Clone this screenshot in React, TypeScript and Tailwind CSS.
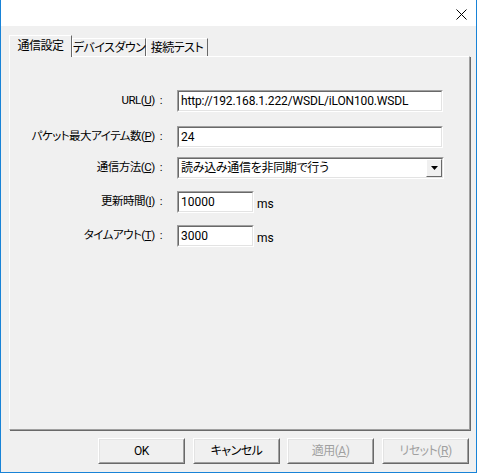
import React from "react";

const font = "font-['Roboto','Noto_Sans_CJK_JP',sans-serif] [font-feature-settings:'palt']";

function Sunken({ className = "", children }: { className?: string; children?: React.ReactNode }) {
  return (
    <div className={`border border-t-[#a0a0a0] border-l-[#a0a0a0] border-b-white border-r-white ${className}`}>
      <div className="h-full border border-t-[#696969] border-l-[#696969] border-b-[#e3e3e3] border-r-[#e3e3e3] bg-white flex items-center">
        {children}
      </div>
    </div>
  );
}

function Btn({ children, disabled = false, className = "" }: { children: React.ReactNode; disabled?: boolean; className?: string }) {
  return (
    <div className={`w-[87px] h-[26px] border border-t-white border-l-white border-b-[#696969] border-r-[#696969] ${className}`}>
      <div
        className={`h-full border border-t-[#e3e3e3] border-l-[#e3e3e3] border-b-[#a0a0a0] border-r-[#a0a0a0] bg-[#f0f0f0] flex items-center justify-center text-[12px] whitespace-nowrap tracking-[-0.5px] ${
          disabled ? "text-[#a0a0a0]" : "text-black"
        }`}
      >
        {children}
      </div>
    </div>
  );
}

function Label({ children }: { children: React.ReactNode }) {
  return (
    <div className="w-[155px] pr-[3px] flex justify-end items-center text-[11.5px] text-black whitespace-nowrap tracking-[-0.5px]">
      <span>{children}</span>
      <span className="ml-[5px]">:</span>
    </div>
  );
}

export default function App() {
  return (
    <div className={`w-[477px] h-[473px] border-x border-b border-[#1883d7] bg-[#f0f0f0] flex flex-col ${font}`}>
      {/* title bar */}
      <div className="h-[26px] bg-white flex justify-end items-start pt-[9px] pr-[9px]">
        <svg width="11" height="11" viewBox="0 0 11 11">
          <path d="M0.5 0.5 L10.5 10.5 M10.5 0.5 L0.5 10.5" stroke="#000" strokeWidth="1" />
        </svg>
      </div>

      <div className="flex-1 flex flex-col pl-[8px] pr-[6px] pt-[9px] pb-[8px]">
        {/* tabs */}
        <div className="h-[21px] flex items-end text-[12px] whitespace-nowrap tracking-[-0.5px]">
          <div className="relative z-10 -mb-[1px] w-[63px] h-[22px] bg-[#f0f0f0] border-t border-l border-white border-r border-r-[#696969] flex items-center justify-center pb-[1px] text-black">
            通信設定
          </div>
          <div className="w-[74px] h-[18px] border-t border-l border-white border-r border-r-[#696969] flex items-center justify-center text-black">
            デバイスダウン
          </div>
          <div className="w-[62px] h-[18px] border-t border-l border-white border-r border-r-[#696969] flex items-center justify-center text-black">
            接続テスト
          </div>
        </div>

        {/* panel */}
        <div className="h-[374px] border border-t-white border-l-white border-r-[#a0a0a0] border-b-[#a0a0a0] shadow-[1px_1px_0_#696969] bg-[#f0f0f0] pt-[33px] text-[12px]">
          <div className="flex items-center h-[22px]">
            <Label>
              URL(<u>U</u>)
            </Label>
            <Sunken className="ml-[12px] w-[266px] h-[22px]">
              <span className="pl-[2px] text-black tracking-[-0.15px]">http://192.168.1.222/WSDL/iLON100.WSDL</span>
            </Sunken>
          </div>
          <div className="flex items-center h-[22px] mt-[14px]">
            <Label>
              パケット最大アイテム数(<u>P</u>)
            </Label>
            <Sunken className="ml-[12px] w-[266px] h-[22px]">
              <span className="pl-[2px] text-black">24</span>
            </Sunken>
          </div>
          <div className="flex items-center h-[22px] mt-[9px]">
            <Label>
              通信方法(<u>C</u>)
            </Label>
            <Sunken className="ml-[12px] w-[267px] h-[22px]">
              <span className="flex-1 pl-[2px] text-black tracking-[-0.3px]">読み込み通信を非同期で行う</span>
              <div className="w-[16px] h-[18px] border border-t-white border-l-white border-b-[#696969] border-r-[#696969] bg-[#f0f0f0] flex items-center justify-center">
                <svg width="7" height="4" viewBox="0 0 7 4">
                  <path d="M0 0 H7 L3.5 4 Z" fill="#000" />
                </svg>
              </div>
            </Sunken>
          </div>
          <div className="flex items-center h-[22px] mt-[12px]">
            <Label>
              更新時間(<u>I</u>)
            </Label>
            <Sunken className="ml-[12px] w-[77px] h-[22px]">
              <span className="pl-[2px] text-black">10000</span>
            </Sunken>
            <span className="ml-[3px] mt-[4px] text-black">ms</span>
          </div>
          <div className="flex items-center h-[22px] mt-[12px]">
            <Label>
              タイムアウト(<u>T</u>)
            </Label>
            <Sunken className="ml-[12px] w-[77px] h-[22px]">
              <span className="pl-[2px] text-black">3000</span>
            </Sunken>
            <span className="ml-[3px] mt-[4px] text-black">ms</span>
          </div>
        </div>

        {/* buttons */}
        <div className="mt-[8px] flex">
          <Btn className="ml-[89px]">OK</Btn>
          <Btn className="ml-[8px]">キャンセル</Btn>
          <Btn className="ml-[7px]" disabled>
            適用(<u>A</u>)
          </Btn>
          <Btn className="ml-[8px]" disabled>
            リセット(<u>R</u>)
          </Btn>
        </div>
      </div>
    </div>
  );
}
